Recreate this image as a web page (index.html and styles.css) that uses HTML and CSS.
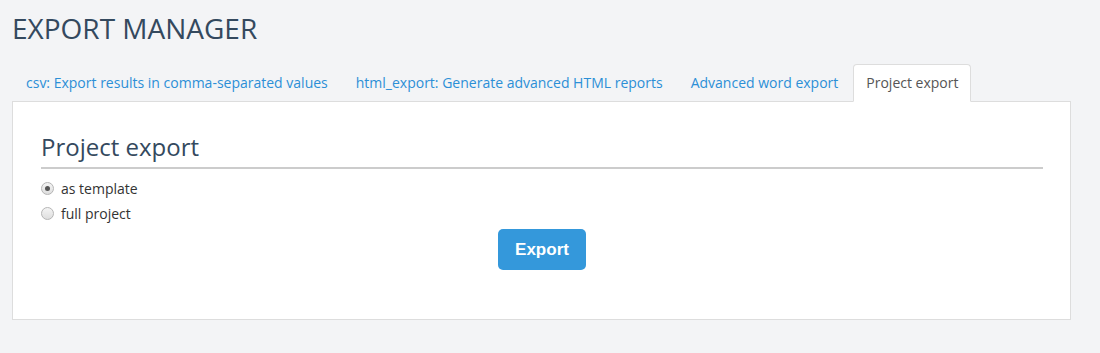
FILE: index.html
```html
<!DOCTYPE html>
<html>
<head>
<meta charset="utf-8">
<title>Export manager</title>
<link rel="stylesheet" href="styles.css">
</head>
<body>
<div class="page">
  <h1 class="title">EXPORT MANAGER</h1>
  <ul class="tabs">
    <li class="tab"><a href="#">csv: Export results in comma-separated values</a></li>
    <li class="tab"><a href="#">html_export: Generate advanced HTML reports</a></li>
    <li class="tab"><a href="#">Advanced word export</a></li>
    <li class="tab active"><a href="#">Project export</a></li>
  </ul>
  <div class="panel">
    <h2 class="section-title">Project export</h2>
    <label class="option"><input type="radio" name="mode" checked><span>as template</span></label>
    <label class="option"><input type="radio" name="mode"><span>full project</span></label>
    <div class="actions"><button class="btn">Export</button></div>
  </div>
</div>
</body>
</html>
```
FILE: styles.css
```css
html, body {
  margin: 0;
  padding: 0;
  background: #f3f4f6;
  font-family: "Open Sans", "DejaVu Sans", sans-serif;
  color: #333;
}
.page {
  padding: 9px 29px 0 12px;
}
.title {
  margin: 0;
  font-size: 28px;
  line-height: 38px;
  font-weight: 400;
  color: #34495e;
}
.tabs {
  list-style: none;
  margin: 17px 0 0 0;
  padding: 0 0 0 1px;
  display: flex;
  font-size: 14px;
  line-height: 20px;
}
.tab {
  margin-right: 2px;
  margin-bottom: -1px;
}
.tab a {
  display: block;
  padding: 8px 12px;
  border: 1px solid transparent;
  border-radius: 4px 4px 0 0;
  color: #2c8fd6;
  text-decoration: none;
}
.tab.active {
  position: relative;
  z-index: 1;
}
.tab.active a {
  background: #fff;
  border-color: #ddd #ddd #fff #ddd;
  color: #555;
}
.panel {
  background: #fff;
  border: 1px solid #ddd;
  padding: 29px 27px 49px 28px;
}
.section-title {
  margin: 0 0 7px 0;
  font-size: 24px;
  line-height: 32px;
  font-weight: 400;
  color: #34495e;
  border-bottom: 2px solid #ccc;
  padding-bottom: 4px;
}
.option {
  display: flex;
  align-items: center;
  gap: 7px;
  font-size: 14px;
  line-height: 25px;
  color: #333;
}
.option input {
  -webkit-appearance: none;
  appearance: none;
  margin: 0;
  width: 13px;
  height: 13px;
  border: 1px solid #b5b5b5;
  border-radius: 50%;
  background: linear-gradient(#f4f4f4, #dedede);
  display: grid;
  place-items: center;
}
.option input:checked::after {
  content: "";
  width: 5px;
  height: 5px;
  border-radius: 50%;
  background: #555;
}
.actions {
  display: flex;
  justify-content: center;
  margin-top: 3px;
}
.btn {
  width: 88px;
  height: 41px;
  border: 0;
  border-radius: 5px;
  background: #3498db;
  color: #fff;
  font-family: "Liberation Sans", Arial, sans-serif;
  font-size: 17px;
  font-weight: 700;
  cursor: pointer;
}
```
